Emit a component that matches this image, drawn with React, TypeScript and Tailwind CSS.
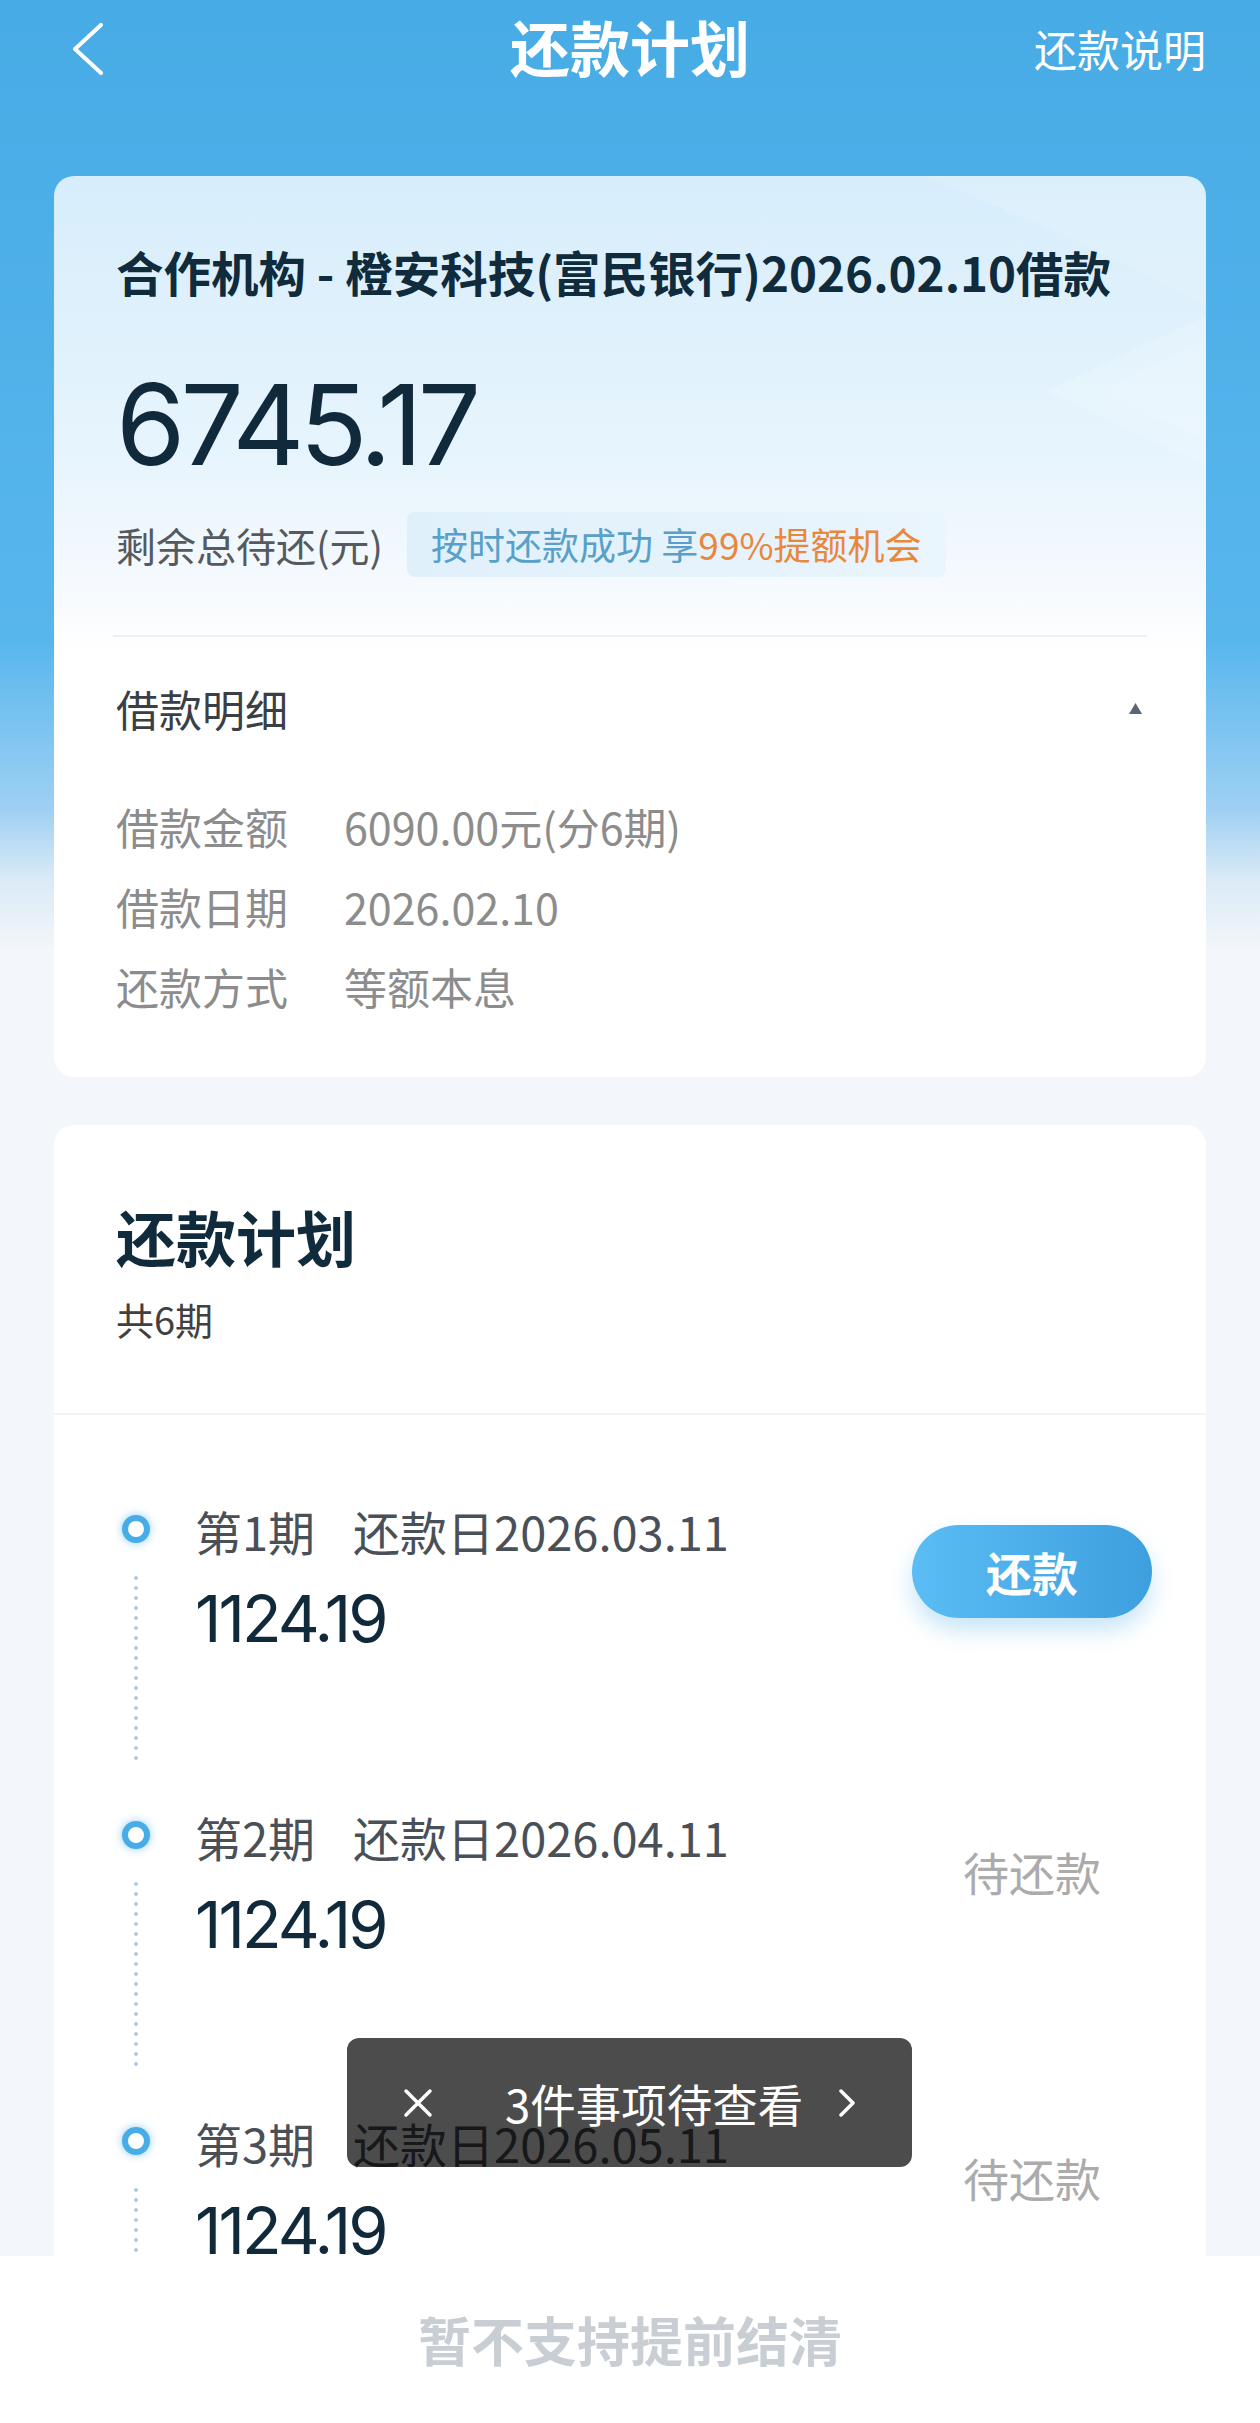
import React from "react";

const cjk = "font-['Noto_Sans_CJK_SC',sans-serif]";
const num = "font-['Inter','Noto_Sans_CJK_SC',sans-serif]";

type Plan = {
  period: number;
  date: string;
  amount: string;
  due: boolean;
};

const plans: Plan[] = [
  { period: 1, date: "2026.03.11", amount: "1124.19", due: true },
  { period: 2, date: "2026.04.11", amount: "1124.19", due: false },
  { period: 3, date: "2026.05.11", amount: "1124.19", due: false },
];

const details = [
  ["借款金额", "6090.00元(分6期)"],
  ["借款日期", "2026.02.10"],
  ["还款方式", "等额本息"],
];

const PlanItem = ({ data }: { data: Plan }) => {
  return (
    <div className="flex h-[306px]">
      <div className="ml-[68px] flex w-[28px] shrink-0 flex-col items-center pt-[14px]">
        <div className="h-[28px] w-[28px] rounded-full border-[6px] border-[#48ace6] bg-white shadow-[0_0_9px_rgba(70,170,230,0.6)]" />
        <div className="mt-[30px] h-[192px] w-[4px] bg-[radial-gradient(circle,#b3cbe0_1.6px,transparent_2px)] bg-[length:4px_10px]" />
      </div>
      <div className="ml-[45px] flex-1">
        <div className={`${cjk} text-[47px] leading-[60px] text-[#4a5058]`}>
          第{data.period}期<span className="ml-[38px]">还款日{data.date}</span>
        </div>
        <div className={`${num} mt-[25px] text-[65px] leading-none tracking-[-0.045em] text-[#112a3b]`}>
          {data.amount}
        </div>
      </div>
      <div className="mr-[54px] w-[240px] shrink-0">
        {data.due ? (
          <button
            className={`${cjk} mt-[24px] flex h-[93px] w-[240px] items-center justify-center rounded-full bg-gradient-to-r from-[#5bbdf4] to-[#3d9fde] text-[46px] font-bold text-white shadow-[0_12px_22px_rgba(72,170,232,0.3)]`}
          >
            还款
          </button>
        ) : (
          <div className={`${cjk} mt-[34px] text-center text-[46px] leading-[60px] text-[#ababab]`}>
            待还款
          </div>
        )}
      </div>
    </div>
  );
};

const App = () => {
  return (
    <div className="relative h-[2423px] w-[1260px] overflow-hidden bg-[linear-gradient(180deg,#47abe5_0px,#58b6ed_640px,#9fd0f3_810px,#dbeaf6_880px,#f3f6fa_950px,#f3f6fa_100%)]">
      {/* header */}
      <div className="grid h-[92px] grid-cols-[1fr_auto_1fr] items-center px-[54px]">
        <svg width="32" height="52" viewBox="0 0 32 52" className="ml-[18px] mt-[6px]">
          <path d="M29 2 L3 26 L29 50" fill="none" stroke="white" strokeWidth="4" strokeLinecap="round" strokeLinejoin="round" />
        </svg>
        <div className={`${cjk} text-[60px] font-bold leading-[80px] text-white`}>还款计划</div>
        <div className={`${cjk} mt-[4px] text-right text-[43px] leading-[60px] text-white`}>还款说明</div>
      </div>

      {/* summary card */}
      <div className="relative mx-[54px] mt-[84px] overflow-hidden rounded-[20px] bg-[linear-gradient(180deg,#d7edfb_0%,#e6f4fd_30%,#f4f9fe_44%,#ffffff_53%)] px-[62px] pb-[61px] pt-[66px]">
        <svg className="absolute right-0 top-0" width="340" height="300" viewBox="0 0 340 300">
          <polygon points="60,0 340,0 340,130 200,60" fill="white" opacity="0.12" />
          <polygon points="180,215 340,140 340,290" fill="white" opacity="0.16" />
          <polygon points="230,215 340,165 340,265" fill="white" opacity="0.1" />
        </svg>
        <div className={`${cjk} relative text-[47.5px] font-bold leading-[60px] text-[#0f2b3c]`}>
          合作机构 - 橙安科技(富民银行)2026.02.10借款
        </div>
        <div className={`${num} relative mt-[66px] text-[112px] leading-none tracking-[-0.045em] text-[#112a3b]`}>
          6745.17
        </div>
        <div className="relative mt-[32px] flex items-center">
          <span className={`${cjk} text-[40px] leading-[60px] text-[#555a60]`}>剩余总待还(元)</span>
          <span
            className={`${cjk} ml-[24px] flex h-[65px] items-center rounded-[8px] bg-gradient-to-r from-[#e0f0fb] to-[#eaf5fd] px-[24px] text-[37px] text-[#58a0c9]`}
          >
            按时还款成功 享<span className="text-[#e9873c]">99%提额机会</span>
          </span>
        </div>
        <div className="relative -mx-[3px] mt-[58px] h-[2px] bg-[#eef1f4]" />
        <div className="mt-[41px] flex items-center justify-between">
          <span className={`${cjk} text-[43px] leading-[60px] text-[#3a3f45]`}>借款明细</span>
          <svg width="13" height="11" viewBox="0 0 13 11" className="mr-[2px]">
            <polygon points="6.5,0 13,11 0,11" fill="#5b6673" />
          </svg>
        </div>
        <div className="mt-[58px] flex flex-col gap-[20px]">
          {details.map(([label, value]) => (
            <div key={label} className={`${cjk} flex text-[43px] leading-[60px] text-[#8c8c8c]`}>
              <span className="w-[228px]">{label}</span>
              <span>{value}</span>
            </div>
          ))}
        </div>
      </div>

      {/* plan card */}
      <div className="mx-[54px] mt-[48px] rounded-t-[20px] bg-white">
        <div className="px-[62px] pb-[68px] pt-[74px]">
          <div className={`${cjk} text-[60px] font-bold leading-[74px] text-[#0f2b3c]`}>还款计划</div>
          <div className={`${cjk} mt-[20px] text-[38px] leading-[52px] text-[#404040]`}>共6期</div>
        </div>
        <div className="h-[2px] bg-[#f1f3f6]" />
        <div className="pt-[86px]">
          {plans.map((p) => (
            <PlanItem key={p.period} data={p} />
          ))}
        </div>
      </div>

      {/* toast */}
      <div className="absolute left-[347px] top-[2038px] flex h-[129px] w-[565px] items-center rounded-[12px] bg-black/70 pl-[56px]">
        <svg width="30" height="30" viewBox="0 0 30 30">
          <path d="M3 3 L27 27 M27 3 L3 27" stroke="white" strokeWidth="3.5" strokeLinecap="round" />
        </svg>
        <span className={`${cjk} ml-[72px] text-[45.5px] leading-[60px] text-white`}>3件事项待查看</span>
        <svg width="16" height="30" viewBox="0 0 16 30" className="ml-[36px]">
          <path d="M2 3 L14 15 L2 27" fill="none" stroke="white" strokeWidth="3.5" strokeLinecap="round" strokeLinejoin="round" />
        </svg>
      </div>

      {/* footer */}
      <div className="absolute bottom-0 left-0 flex h-[167px] w-full items-center justify-center bg-white">
        <span className={`${cjk} text-[53px] font-bold text-[#c9ced4]`}>暂不支持提前结清</span>
      </div>
    </div>
  );
};

export default App;
